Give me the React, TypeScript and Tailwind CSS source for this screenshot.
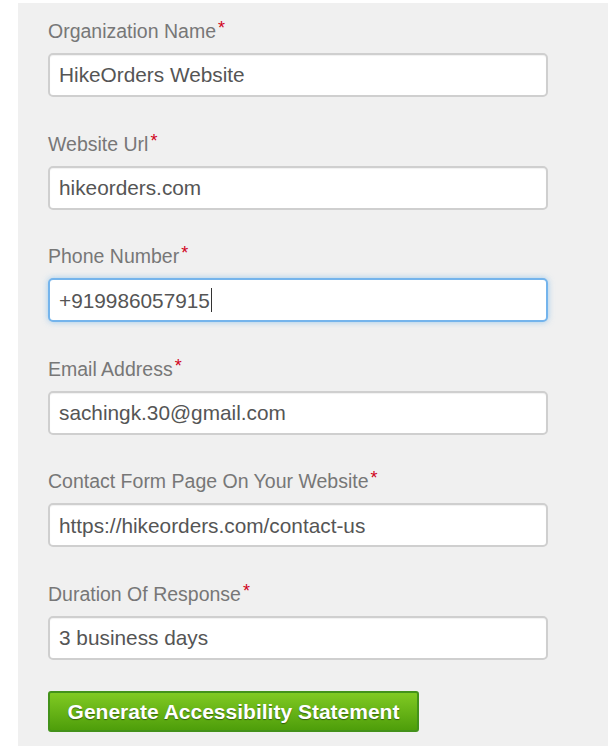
const fields = [
  { label: 'Organization Name', value: 'HikeOrders Website' },
  { label: 'Website Url', value: 'hikeorders.com' },
  { label: 'Phone Number', value: '+919986057915', focused: true },
  { label: 'Email Address', value: 'sachingk.30@gmail.com' },
  { label: 'Contact Form Page On Your Website', value: 'https://hikeorders.com/contact-us' },
  { label: 'Duration Of Response', value: '3 business days' },
]

export default function App() {
  return (
    <div className="h-[747px] w-[608px] bg-white pt-[3px] pl-[18px] font-['Liberation_Sans',Arial,sans-serif]">
      <div className="h-[743px] bg-[#f0f0f0] pl-[30px] pr-[60px] pt-[17px]">
        <div className="flex flex-col gap-[35.6px]">
          {fields.map((field) => (
            <div key={field.label}>
              <div className="flex h-[22px] items-start text-[19.5px] leading-[22px] text-[#777]">
                {field.label}
                <span className="ml-[2px] text-[18px] leading-[16px] text-[#d0021b]">*</span>
              </div>
              <div
                className={`mt-[11px] flex h-[44px] items-center rounded-[5px] border-2 bg-white px-[9px] text-[20.8px] text-[#555] ${
                  field.focused
                    ? 'border-[#74b4ec] shadow-[0_0_6px_rgba(102,175,233,0.6)]'
                    : 'border-[#cfcfcf] shadow-[inset_0_1px_1px_rgba(0,0,0,0.06)]'
                }`}
              >
                {field.value}
                {field.focused ? <span className="ml-[1px] h-[24px] w-px bg-[#333]" /> : null}
              </div>
            </div>
          ))}
        </div>
        <button
          type="button"
          className="mt-[31px] flex h-[41px] w-[371px] items-center justify-center rounded-[3px] border-2 border-[#43921a] bg-gradient-to-b from-[#80ca22] to-[#4e9e0a] text-[21px] font-bold text-white [text-shadow:0_1px_1px_rgba(0,0,0,0.45)]"
        >
          Generate Accessibility Statement
        </button>
      </div>
    </div>
  )
}
